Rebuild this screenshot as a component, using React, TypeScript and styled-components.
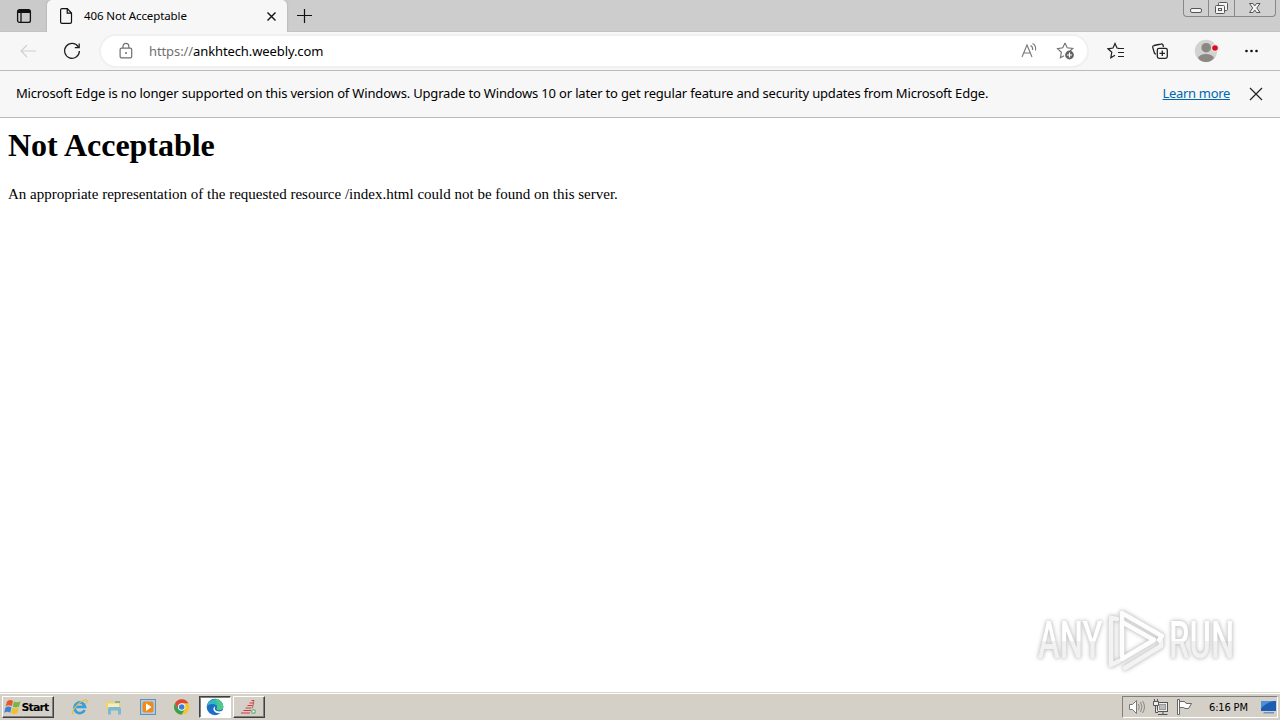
import React from 'react';
import styled, { createGlobalStyle } from 'styled-components';

const GlobalStyle = createGlobalStyle`
    * {
        box-sizing: border-box;
    }

    body {
        margin: 0;
        overflow: hidden;
        background: #fff;
    }
`;

const Screen = styled.div`
    width: 1280px;
    height: 720px;
    display: flex;
    flex-direction: column;
    position: relative;
    overflow: hidden;
    color: #000;
    font-family: 'Noto Sans', 'Open Sans', sans-serif;
`;

const TabStrip = styled.div`
    height: 32px;
    flex: none;
    display: flex;
    background: #cdcdcd;
    border-bottom: 1px solid #c3c3c3;
`;

const TabMenu = styled.div`
    width: 47px;
    display: flex;
    align-items: center;
    padding-left: 16px;
    background: #cacaca;
    border-radius: 0 0 5px 0;
`;

const Tab = styled.div`
    width: 240px;
    height: 32px;
    display: flex;
    align-items: center;
    padding: 0 9px 0 11px;
    background: #f7f7f7;
    border-radius: 5px 5px 0 0;
    box-shadow: 0 0 2px #999;
    clip-path: inset(0 -3px 0 -3px);
`;

const TabTitle = styled.span`
    flex: 1;
    margin-left: 10px;
    padding-bottom: 2px;
    font-size: 11.5px;
    letter-spacing: -0.1px;
    white-space: nowrap;
`;

const NewTab = styled.div`
    display: flex;
    align-items: center;
    margin-left: 9px;
`;

const WindowButtons = styled.div`
    display: flex;
    height: 17px;
    margin-left: auto;
    margin-right: 4px;
    border: 1px solid #888;
    border-top: 0;
    border-radius: 0 0 4px 4px;
    background: #d0d0d0;
`;

const WindowButton = styled.div<{ width: number }>`
    width: ${(props) => props.width}px;
    display: flex;
    justify-content: center;
    align-items: center;

    & + & {
        border-left: 1px solid #888;
    }
`;

const Toolbar = styled.div`
    height: 39px;
    flex: none;
    display: flex;
    align-items: center;
    background: #f7f7f7;
    border-bottom: 1px solid #bababa;
    padding-left: 18px;
`;

const AddressBar = styled.div`
    width: 990px;
    height: 34px;
    display: flex;
    align-items: center;
    margin: 0 18px 0 17px;
    padding: 0 11px 0 17px;
    background: #fff;
    border: 2px solid #f0f0f0;
    border-radius: 17px;
`;

const Url = styled.span`
    flex: 1;
    margin-left: 15px;
    font-size: 13px;
    letter-spacing: -0.1px;
    white-space: nowrap;
`;

const Scheme = styled.span`
    color: #707070;
`;

const Gap = styled.div<{ width: number }>`
    width: ${(props) => props.width}px;
    flex: none;
`;

const InfoBar = styled.div`
    height: 47px;
    flex: none;
    display: flex;
    align-items: center;
    padding: 0 17px 0 16px;
    background: #f7f7f7;
    border-bottom: 1px solid #bababa;
    font-size: 13px;
    white-space: nowrap;
`;

const InfoText = styled.span`
    flex: 1;
    padding-bottom: 2px;
    letter-spacing: -0.173px;
`;

const InfoLink = styled.a`
    margin-right: 19px;
    padding-bottom: 2px;
    color: #0067b0;
    letter-spacing: -0.33px;
    text-decoration: underline;
`;

const Page = styled.main`
    flex: 1;
    padding: 9px 8px 8px;
    font-family: 'Liberation Serif', serif;
    background: #fff;
`;

const Heading = styled.h1`
    margin: 0;
    font-size: 32px;
    line-height: 37px;
    letter-spacing: -0.02px;
`;

const Message = styled.p`
    margin: 21px 0 0;
    font-size: 15px;
    line-height: 18px;
    white-space: nowrap;
`;

// lies over the page content
const Watermark = styled.div`
    position: absolute;
    left: 1038px;
    top: 608px;
    display: flex;
    align-items: center;
    height: 66px;
    filter: drop-shadow(0 0 2px #c2c2c2) drop-shadow(0 0 1px #ddd);
`;

const WatermarkText = styled.div<{ width: number }>`
    width: ${(props) => props.width}px;
    font: 500 52px/66px Roboto, sans-serif;
    white-space: nowrap;

    span {
        display: inline-block;
        transform: scaleX(0.63);
        transform-origin: 0 50%;
        color: transparent;
        background: linear-gradient(#fff 50%, #f1f1f1 50%);
        background-clip: text;
    }
`;

const Taskbar = styled.div`
    height: 28px;
    flex: none;
    display: flex;
    align-items: center;
    padding: 2px 2px 1px;
    background: #d4d0c8;
    border-top: 1px solid #d8d5ce;
    box-shadow: inset 0 1px #fff;
`;

const TaskButton = styled.div<{ width: number; pressed?: boolean }>`
    width: ${(props) => props.width}px;
    height: 22px;
    display: flex;
    align-items: center;
    justify-content: center;
    border: 1px solid;
    border-color: ${(props) => (props.pressed ? '#404040 #fff #fff #404040' : '#fff #404040 #404040 #fff')};
    box-shadow: ${(props) => (props.pressed ? 'inset 1px 1px #808080' : 'inset -1px -1px #808080')};
    background: ${(props) => (props.pressed ? '#fff' : '#d4d0c8')};
`;

const StartLabel = styled.span`
    width: 31px;
    margin-left: 1px;
    font: bold 11px 'DejaVu Sans', sans-serif;
    letter-spacing: -0.9px;
`;

const QuickLaunch = styled.div`
    display: flex;
    align-items: center;
    gap: 17px;
    margin: 0 9px 0 17px;
`;

const Tray = styled.div`
    width: 156px;
    height: 22px;
    display: flex;
    align-items: center;
    margin-left: auto;
    padding-left: 5px;
    border: 1px solid;
    border-color: #808080 #fff #fff #808080;
`;

const Clock = styled.span`
    width: 41px;
    margin: 0 10px 0 15px;
    font: 11px 'DejaVu Sans Condensed', 'DejaVu Sans', sans-serif;
    letter-spacing: -0.15px;
    white-space: nowrap;
`;

type IconProps = {
    width?: number;
    height?: number;
    color?: string;
    stroke?: number;
    children: React.ReactNode;
}

const StyledSvg = styled.svg`
    flex: none;
    display: block;
`;

const Icon: React.FC<IconProps> = ({ width = 20, height = 20, color = '#222', stroke = 1.1, children }: IconProps) => (
    <StyledSvg width={width}
        height={height}
        viewBox={`0 0 ${width} ${height}`}
        fill="none"
        stroke={color}
        strokeWidth={stroke}
    >
        {children}
    </StyledSvg>
);

const BrowserTabs: React.FC = () => (
    <TabStrip>
        <TabMenu>
            <Icon width={16} height={16} color="#111" stroke={1.3}>
                <rect x="1.6" y="1.6" width="12.8" height="12.8" rx="2" />
                <path d="M2 3.5H14" strokeWidth="3" />
                <path d="M5 5V14" />
            </Icon>
        </TabMenu>
        <Tab>
            <Icon width={16} height={18} color="#111" stroke={1.2}>
                <path d="M2.6 3.2Q2.6 1.6 4 1.6H9.3L13.5 6V15Q13.5 16.4 12 16.4H4Q2.6 16.4 2.6 15ZM9.2 1.8V6.2H13.4" />
            </Icon>
            <TabTitle>406 Not Acceptable</TabTitle>
            <Icon width={14} height={14} color="#111" stroke={1.4}>
                <path d="M3.5 3.5L11.5 11.5M11.5 3.5L3.5 11.5" />
            </Icon>
        </Tab>
        <NewTab>
            <Icon width={16} height={16} color="#111" stroke={1.2}>
                <path d="M8.5 1V15M1 7.5H16" />
            </Icon>
        </NewTab>
        <WindowButtons>
            <WindowButton width={24}>
                <Icon width={14} height={14} color="#555" stroke={1}>
                    <rect x="1.5" y="7.5" width="11" height="4" rx="1.5" fill="#f4f4f4" />
                </Icon>
            </WindowButton>
            <WindowButton width={26}>
                <Icon width={14} height={14} color="#555" stroke={1}>
                    <rect x="3.5" y="1.5" width="9" height="8" rx="1" fill="#f4f4f4" />
                    <rect x=".5" y="4.5" width="9" height="8" rx="1" fill="#f4f4f4" />
                    <rect x="3.5" y="7.5" width="3" height="2" />
                </Icon>
            </WindowButton>
            <WindowButton width={41}>
                <Icon width={14} height={14} color="#555" stroke={1}>
                    <path d="M1.5 2.5H5L6.7 5L8.5 2.5H12L8.8 7L12 11.5H8.5L6.7 9L5 11.5H1.5L4.7 7Z" fill="#f4f4f4" />
                </Icon>
            </WindowButton>
        </WindowButtons>
    </TabStrip>
);

const BrowserToolbar: React.FC = () => (
    <Toolbar>
        <Icon color="#cfcfcf">
            <path d="M18 10H3M9 4L3 10L9 16" />
        </Icon>
        <Gap width={24} />
        <Icon stroke={1.3}>
            <path d="M16.2 5.8A7.4 7.4 0 1 0 17.4 10M17.2 2.5V6.7H12.8" />
        </Icon>
        <AddressBar>
            <Icon width={16} height={18} color="#707070" stroke={1.2}>
                <rect x="2.1" y="6.2" width="11.6" height="9.6" rx="1.4" />
                <path d="M5 6V4.3A2.9 2.9 0 0 1 10.8 4.3V6" />
                <circle cx="8" cy="11" r="1" fill="#707070" stroke="none" />
            </Icon>
            <Url>
                <Scheme>https://</Scheme>
                ankhtech.weebly.com
            </Url>
            <Icon color="#777">
                <path d="M3 16L8 4L13 16M4.8 12H11.2M11.5 4.5Q14 5.5 13.6 9M13.5 2.5Q17.5 4.5 16.5 9.5" />
            </Icon>
            <Gap width={17} />
            <Icon color="#707070">
                <path d="M9 2L11.2 6.8L16.8 7.4L14 10M9 2L6.8 6.8L1.5 7.6L5.4 11.3L4.4 16.7L8 14.7" />
                <circle cx="13.5" cy="14" r="4.4" fill="#626262" stroke="none" />
                <path d="M13.5 11.5V16.5M11 14H16" stroke="#fff" strokeWidth="1.2" />
            </Icon>
        </AddressBar>
        <Icon width={18} height={18} stroke={1.2}>
            <path d="M12.5 6.5L10 6L8 1.5L6 6L1 6.8L4.8 10.2L3.8 15.8L8 13.2" />
            <path d="M11 6.5H17M11 10.5H17M11 14.5H17" />
        </Icon>
        <Gap width={26} />
        <Icon width={18} height={18} stroke={1.3}>
            <rect x="6.3" y="6.3" width="10" height="10" rx="1.8" />
            <path d="M11.3 8.5V14M8.5 11.3H14" />
            <path d="M12.5 5L12 3Q11.5 1.6 10 2L3 3.5Q1.3 4 1.8 5.6L3.4 11Q3.7 12 5 12" />
        </Icon>
        <Gap width={25} />
        <Icon width={26} height={24} stroke={0}>
            <circle cx="12" cy="12" r="11.2" fill="#d2d2d0" />
            <circle cx="12.2" cy="8.7" r="4.8" fill="#8b8783" />
            <path d="M4 19Q6 15 12 15T20 19Q17 23 12 23T4 19Z" fill="#8b8783" />
            <circle cx="21" cy="9" r="3.7" fill="#f3e6e4" />
            <circle cx="21" cy="9" r="2.8" fill="#d90f1d" />
        </Icon>
        <Gap width={24} />
        <Icon width={16} height={16} stroke={0}>
            <circle cx="2.5" cy="8" r="1.3" fill="#111" />
            <circle cx="7.5" cy="8" r="1.3" fill="#111" />
            <circle cx="12.5" cy="8" r="1.3" fill="#111" />
        </Icon>
    </Toolbar>
);

const AnyRunMark: React.FC = () => (
    <Watermark>
        <WatermarkText width={68}><span>ANY</span></WatermarkText>
        <Icon width={63} height={66}>
            <g strokeLinejoin="round" strokeLinecap="round" strokeWidth="4.5">
                <path d="M11 11L5 10V57L13 53M19 60L55 38V33" stroke="#f3f3f3" />
                <path d="M16 48V5L56 28L53 32M16 14L48 32L16 51" stroke="#fdfdfd" />
            </g>
        </Icon>
        <WatermarkText width={66}><span>RUN</span></WatermarkText>
    </Watermark>
);

const WindowsTaskbar: React.FC = () => (
    <Taskbar>
        <TaskButton width={52}>
            <Icon width={17} height={18} stroke={0}>
                <path d="M3 3.5Q6 .8 9 3L7.8 8.3Q4.5 6.3 1.7 8.6Z" fill="#e8572c" />
                <path d="M10 3.5Q13 5.2 16.5 3.2L15 8.6Q12 10.4 8.8 8.6Z" fill="#78b543" />
                <path d="M1.4 9.7Q4.5 7.6 7.5 9.6L6.2 14.8Q3.2 12.8 .2 14.9Z" fill="#3b83d0" />
                <path d="M8.5 9.8Q11.6 11.5 14.7 9.8L13.3 15.2Q10.2 16.9 7.2 15.1Z" fill="#f4bd29" />
            </Icon>
            <StartLabel>Start</StartLabel>
        </TaskButton>
        <QuickLaunch>
            <Icon width={17} height={18} stroke={0}>
                <path d="M13.6 12A5.3 5.3 0 1 1 14 8.9H5" stroke="#3a9fd8" strokeWidth="2.8" />
                <path d="M2.5 16.3C-1 14.5 7 4 14 2Q17.2 1.3 15.3 5.5" stroke="#e3bd4d" strokeWidth="1.2" />
            </Icon>
            <Icon width={17} height={18} stroke={0}>
                <path d="M1 3H6L7.5 4.5H15.5V13H1Z" fill="#ead27a" />
                <path d="M3 5.5H14V9H3Z" fill="#f8edb5" />
                <path d="M3 16.5V11Q3 9 5 9H14Q16 9 16 11V16.5H13V12.5H6V16.5Z" fill="#79b8da" />
                <path d="M10 4H15" stroke="#56a15a" strokeWidth="1.2" />
            </Icon>
            <Icon width={17} height={18} stroke={0}>
                <rect x="1.5" y="1.5" width="15" height="15" fill="#a9cdea" stroke="#5f91ba" strokeWidth="1" />
                <rect x="3.5" y="3.5" width="11" height="11" rx="2" fill="#f08b19" />
                <path d="M7 5.3V12.9L12.5 9.1Z" fill="#fff" />
            </Icon>
            <Icon width={17} height={18} stroke={0}>
                <circle cx="8.7" cy="9" r="7.7" fill="#f4c62e" />
                <path d="M2 5.2A7.7 7.7 0 0 1 15.4 5.3H8.7L5 11Z" fill="#df4639" />
                <path d="M2 5.2A7.7 7.7 0 0 0 8.5 16.7L12 11H5.3Z" fill="#38a052" />
                <circle cx="8.7" cy="9" r="3.7" fill="#fff" />
                <circle cx="8.7" cy="9" r="2.8" fill="#397fdb" />
            </Icon>
        </QuickLaunch>
        <TaskButton width={32} pressed>
            <Icon width={18} height={18} stroke={0}>
                <circle cx="9" cy="9" r="8.3" fill="#1b6fc4" />
                <path d="M.9 8A8.3 8.3 0 0 1 17.3 8.8Q17 12.2 13.2 12.3Q10 12 10.8 10.3Q12 7.5 8.5 6.3Q4.5 5 .9 8Z" fill="#35b9bd" />
                <path d="M9 .7A8.3 8.3 0 0 1 17.3 8.8Q17 12.2 13.2 12.3Q10 12 10.8 10.3Q13 6 9 .7Z" fill="#4cc98b" />
                <path d="M9.2 8.2Q7.5 12.5 12 13.3Q15 13.8 18 12V18H13.5Q16 16 16 14.8Q10.5 16.5 8 13Q6.3 9.8 9.2 8.2Z" fill="#fff" />
            </Icon>
        </TaskButton>
        <Gap width={2} />
        <TaskButton width={32}>
            <Icon width={18} height={18} color="#cc3a40" stroke={1.2}>
                <path d="M11.5 2.5H14M9.5 5H13.5M7.5 7.5H12.5M5.5 10H11.5M3.5 12.5H11M1 15H10" />
                <path d="M14 2.5L12.5 10" strokeWidth=".8" />
                <circle cx="13.5" cy="13.5" r="2.6" fill="#7db68a" stroke="none" />
                <path d="M12.6 12L15 13.5L12.6 15Z" fill="#eef5ef" stroke="none" />
            </Icon>
        </TaskButton>
        <Tray>
            <Icon width={18} height={18} color="#777" stroke={1}>
                <path d="M1.5 6.5H4.5L8.5 2.5V15.5L4.5 11.5H1.5Z" fill="#fff" />
                <path d="M10.5 6Q12 9 10.5 12M12.5 4Q15.5 9 12.5 14M14.5 3Q18.5 9 14.5 15" strokeWidth=".8" />
            </Icon>
            <Gap width={6} />
            <Icon width={18} height={18} color="#555" stroke={1}>
                <rect x="5.5" y="4.5" width="10" height="9" fill="#eee" />
                <rect x="7.5" y="6.5" width="6" height="5" fill="#bbb" stroke="#999" />
                <path d="M6 16.5H15.5M11 13.5V16" />
                <path d="M2.5 1V3.5M5.5 1V3.5M1.5 3.5H6.5V7.5H1.5ZM3.5 7.5V14.5H6" fill="#eee" />
            </Icon>
            <Gap width={6} />
            <Icon width={18} height={18} color="#666" stroke={1}>
                <path d="M1.5 1.5H3.5V16.5H1.5ZM3.5 3.5H8.5Q9.5 5.5 11 5.5H15.5L12.5 10.5H9Q8 9.5 7.5 9.5H3.5Z" fill="#fff" />
            </Icon>
            <Clock>6:16 PM</Clock>
            <Icon width={17} height={18} stroke={0}>
                <rect x="1" y="3" width="15" height="10" fill="#1d5cb4" />
                <path d="M1 3H14Q5 5 1 11Z" fill="#4a91d6" />
                <path d="M4 14H14V15.5H3Z" fill="#6f93b8" />
            </Icon>
        </Tray>
    </Taskbar>
);

const App: React.FC = () => (
    <Screen>
        <GlobalStyle />
        <BrowserTabs />
        <BrowserToolbar />
        <InfoBar>
            <InfoText>
                Microsoft Edge is no longer supported on this version of Windows. Upgrade to Windows 10 or later to get regular feature and security updates from Microsoft Edge.
            </InfoText>
            <InfoLink>Learn more</InfoLink>
            <Icon width={14} height={14} color="#222" stroke={1.2}>
                <path d="M1 1L13 13M13 1L1 13" />
            </Icon>
        </InfoBar>
        <Page>
            <Heading>Not Acceptable</Heading>
            <Message>An appropriate representation of the requested resource /index.html could not be found on this server.</Message>
        </Page>
        <AnyRunMark />
        <WindowsTaskbar />
    </Screen>
);

export default App;
